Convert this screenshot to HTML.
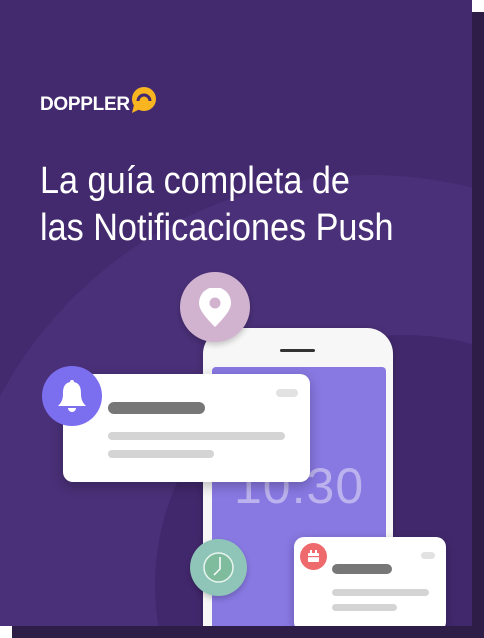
<!DOCTYPE html>
<html><head><style>
html,body{margin:0;width:484px;height:638px;overflow:hidden}
body{background:#fff;position:relative;font-family:"Liberation Sans",sans-serif}
.abs{position:absolute}
.bar{position:absolute;border-radius:5px}
</style></head><body>
<div class="abs" style="left:472px;top:12px;width:12px;height:626px;background:#2d1d47"></div>
<div class="abs" style="left:12px;top:626px;width:472px;height:12px;background:#2d1d47"></div>
<div class="abs" style="left:0;top:0;width:472px;height:626px;background:#432a6e;overflow:hidden">
  <div class="abs" style="left:-50px;top:175px;width:840px;height:840px;border-radius:50%;background:#4a3078"></div>
  <div class="abs" style="left:155px;top:335px;width:500px;height:500px;border-radius:50%;background:#41286c"></div>
  <div class="abs" style="left:40px;top:95px;color:#fff;font-weight:bold;font-size:19px;letter-spacing:-0.3px;line-height:20px">DOPPLER</div>
  <svg class="abs" style="left:129px;top:86px" width="28" height="28" viewBox="0 0 28 28">
    <circle cx="15" cy="13" r="12" fill="#f9b520"/><path d="M5 19 L3 27 L11 23Z" fill="#f9b520"/>
    <path d="M9 15 A6 6 0 0 1 21 15" stroke="#432a6e" stroke-width="3" fill="none"/>
  </svg>
  <div class="abs" style="left:40px;top:158px;color:#fff;font-size:38px;line-height:47px;transform:scaleX(0.9);transform-origin:0 0;white-space:nowrap">La guía completa de<br>las Notificaciones Push</div>
  <div class="abs" style="left:203px;top:328px;width:190px;height:298px;border-radius:26px 26px 0 0;background:#f7f7f7;box-shadow:0 2px 8px rgba(0,0,0,.2)"></div>
  <div class="abs" style="left:280px;top:349px;width:35px;height:3px;background:#333;border-radius:2px"></div>
  <div class="abs" style="left:212px;top:367px;width:174px;height:259px;border-radius:4px 4px 0 0;background:#8878e2"></div>
  <div class="abs" style="left:234px;top:456px;color:#bcb2ee;font-size:50px;line-height:60px;letter-spacing:1px">10:30</div>
  <div class="abs" style="left:180px;top:272px;width:70px;height:70px;border-radius:50%;background:#d1b3d0;box-shadow:0 3px 6px rgba(0,0,0,.2)"></div>
  <svg class="abs" style="left:196px;top:288px" width="38" height="40" viewBox="0 0 38 40"><path d="M19 39 C8 28 3 21 3 15 A16 16 0 0 1 35 15 C35 21 30 28 19 39Z" fill="#fff"/><circle cx="19" cy="15" r="5.5" fill="#d1b3d0"/></svg>
  <div class="abs" style="left:63px;top:374px;width:247px;height:108px;border-radius:10px;background:#fff;box-shadow:0 4px 12px rgba(0,0,0,.25)"></div>
  <div class="bar" style="left:276px;top:389px;width:22px;height:8px;background:#e2e2e2"></div>
  <div class="bar" style="left:108px;top:402px;width:97px;height:12px;background:#777;border-radius:6px"></div>
  <div class="bar" style="left:108px;top:432px;width:177px;height:8px;background:#d4d4d4"></div>
  <div class="bar" style="left:108px;top:450px;width:106px;height:8px;background:#d4d4d4"></div>
  <div class="abs" style="left:42px;top:366px;width:60px;height:60px;border-radius:50%;background:#7b6ff0"></div>
  <svg class="abs" style="left:52px;top:376px" width="40" height="40" viewBox="0 0 40 40"><path d="M20 4 C21.5 4 22 5 22 6 C28 7.5 29 12 29 18 C29 24 31 27 34 30 L6 30 C9 27 11 24 11 18 C11 12 12 7.5 18 6 C18 5 18.5 4 20 4Z" fill="#fff"/><path d="M16 32 A4 4 0 0 0 24 32Z" fill="#fff"/></svg>
  <div class="abs" style="left:190px;top:539px;width:57px;height:57px;border-radius:50%;background:#8fc5b9;box-shadow:0 3px 6px rgba(0,0,0,.2)"></div>
  <svg class="abs" style="left:202px;top:551px" width="33" height="33" viewBox="0 0 33 33"><circle cx="16.5" cy="16.5" r="14.5" fill="#7fbc9e" stroke="#e8f5ef" stroke-width="1.5"/><path d="M18 6 L18 18 L12 24" stroke="#fff" stroke-width="1.5" fill="none"/></svg>
  <div class="abs" style="left:294px;top:537px;width:152px;height:95px;border-radius:10px;background:#fff;box-shadow:0 3px 10px rgba(0,0,0,.25)"></div>
  <div class="bar" style="left:421px;top:552px;width:14px;height:7px;background:#e2e2e2"></div>
  <div class="bar" style="left:332px;top:564px;width:60px;height:10px;background:#777"></div>
  <div class="bar" style="left:332px;top:589px;width:97px;height:7px;background:#d4d4d4"></div>
  <div class="bar" style="left:332px;top:604px;width:65px;height:7px;background:#d4d4d4"></div>
  <div class="abs" style="left:300px;top:543px;width:27px;height:27px;border-radius:50%;background:#ee6a6c"></div>
  <svg class="abs" style="left:306px;top:549px" width="15" height="15" viewBox="0 0 15 15"><rect x="2" y="4" width="11" height="9" rx="1" fill="#fff"/><rect x="4" y="1" width="2" height="4" fill="#fff"/><rect x="9" y="1" width="2" height="4" fill="#fff"/><rect x="2" y="7" width="11" height="1.2" fill="#ee6a6c"/></svg>
</div>
</body></html>
